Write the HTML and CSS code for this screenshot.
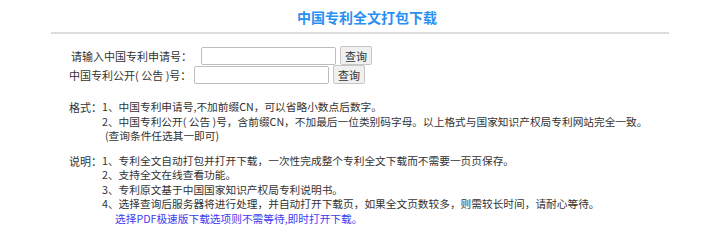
FILE: index.html
```html
<!DOCTYPE html>
<html lang="zh-CN">
<head>
    <meta charset="UTF-8">
    <title>中国专利全文打包下载</title>
    <link rel="stylesheet" href="styles.css">
</head>
<body>
    <div class="page">
        <h1 class="title">中国专利全文打包下载</h1>
        <hr class="rule">

        <div class="search">
            <div class="search-row row-apply">
                <label for="applyNo">请输入中国专利申请号：</label>
                <input type="text" id="applyNo">
                <button type="button">查询</button>
            </div>
            <div class="search-row row-pub">
                <label for="pubNo">中国专利公开( 公告 )号：</label>
                <input type="text" id="pubNo">
                <button type="button">查询</button>
            </div>
        </div>

        <div class="notes notes-format">
            <span class="notes-head">格式：</span>
            <div class="notes-body">
                <div>1、中国专利申请号,不加前缀CN，可以省略小数点后数字。</div>
                <div>2、中国专利公开( 公告 )号，含前缀CN，不加最后一位类别码字母。以上格式与国家知识产权局专利网站完全一致。</div>
                <div class="note-extra">(查询条件任选其一即可)</div>
            </div>
        </div>

        <div class="notes notes-desc">
            <span class="notes-head">说明：</span>
            <div class="notes-body">
                <div>1、专利全文自动打包并打开下载，一次性完成整个专利全文下载而不需要一页页保存。</div>
                <div>2、支持全文在线查看功能。</div>
                <div>3、专利原文基于中国国家知识产权局专利说明书。</div>
                <div>4、选择查询后服务器将进行处理，并自动打开下载页，如果全文页数较多，则需较长时间，请耐心等待。</div>
                <div class="note-tip">选择PDF极速版下载选项则不需等待,即时打开下载。</div>
            </div>
        </div>
    </div>
</body>
</html>
```

FILE: styles.css
```css
body {
    margin: 0;
    background: #fff;
    font-family: "Noto Sans CJK SC", "Noto Sans", sans-serif;
    font-size: 11px;
    color: #333;
}

.page {
    width: 618px;
    margin: 0 auto;
    padding-top: 7px;
}

.title {
    margin: 0;
    text-align: center;
    font-size: 14px;
    line-height: 20px;
    font-weight: bold;
    color: #2a8ff2;
    padding-left: 14px;
}

.rule {
    margin: 5px 0 0;
    border: 0;
    border-top: 2px solid #dcdcdc;
}

/* search form */
.search {
    margin-top: 12px;
    padding-left: 18px;
}

.search-row {
    display: flex;
    align-items: center;
    height: 19px;
}

.row-apply label {
    padding-left: 2px;
    width: 130px;
}

.row-pub label {
    width: 125px;
}

.search-row input {
    width: 135px;
    height: 18px;
    box-sizing: border-box;
    border: 1px solid #bdbdbd;
    border-radius: 2px;
    margin: 0;
}

.search-row button {
    margin-left: 4px;
    width: 32px;
    height: 19px;
    padding: 0;
    font-family: inherit;
    font-size: 11px;
    color: #333;
    background: #f0f0f0;
    border: 1px solid #c6c6c6;
    border-radius: 2px;
}

/* notes */
.notes {
    display: flex;
    padding-left: 18px;
    line-height: 14.5px;
}

.notes-format {
    margin-top: 16px;
}

.notes-desc {
    margin-top: 10px;
}

.notes-head {
    flex-shrink: 0;
    white-space: nowrap;
    width: 33px;
}

.notes-body {
    font-size: 10.7px;
}

.note-extra {
    padding-left: 3px;
}

.note-tip {
    padding-left: 13px;
    color: #3b3bf0;
}
```
